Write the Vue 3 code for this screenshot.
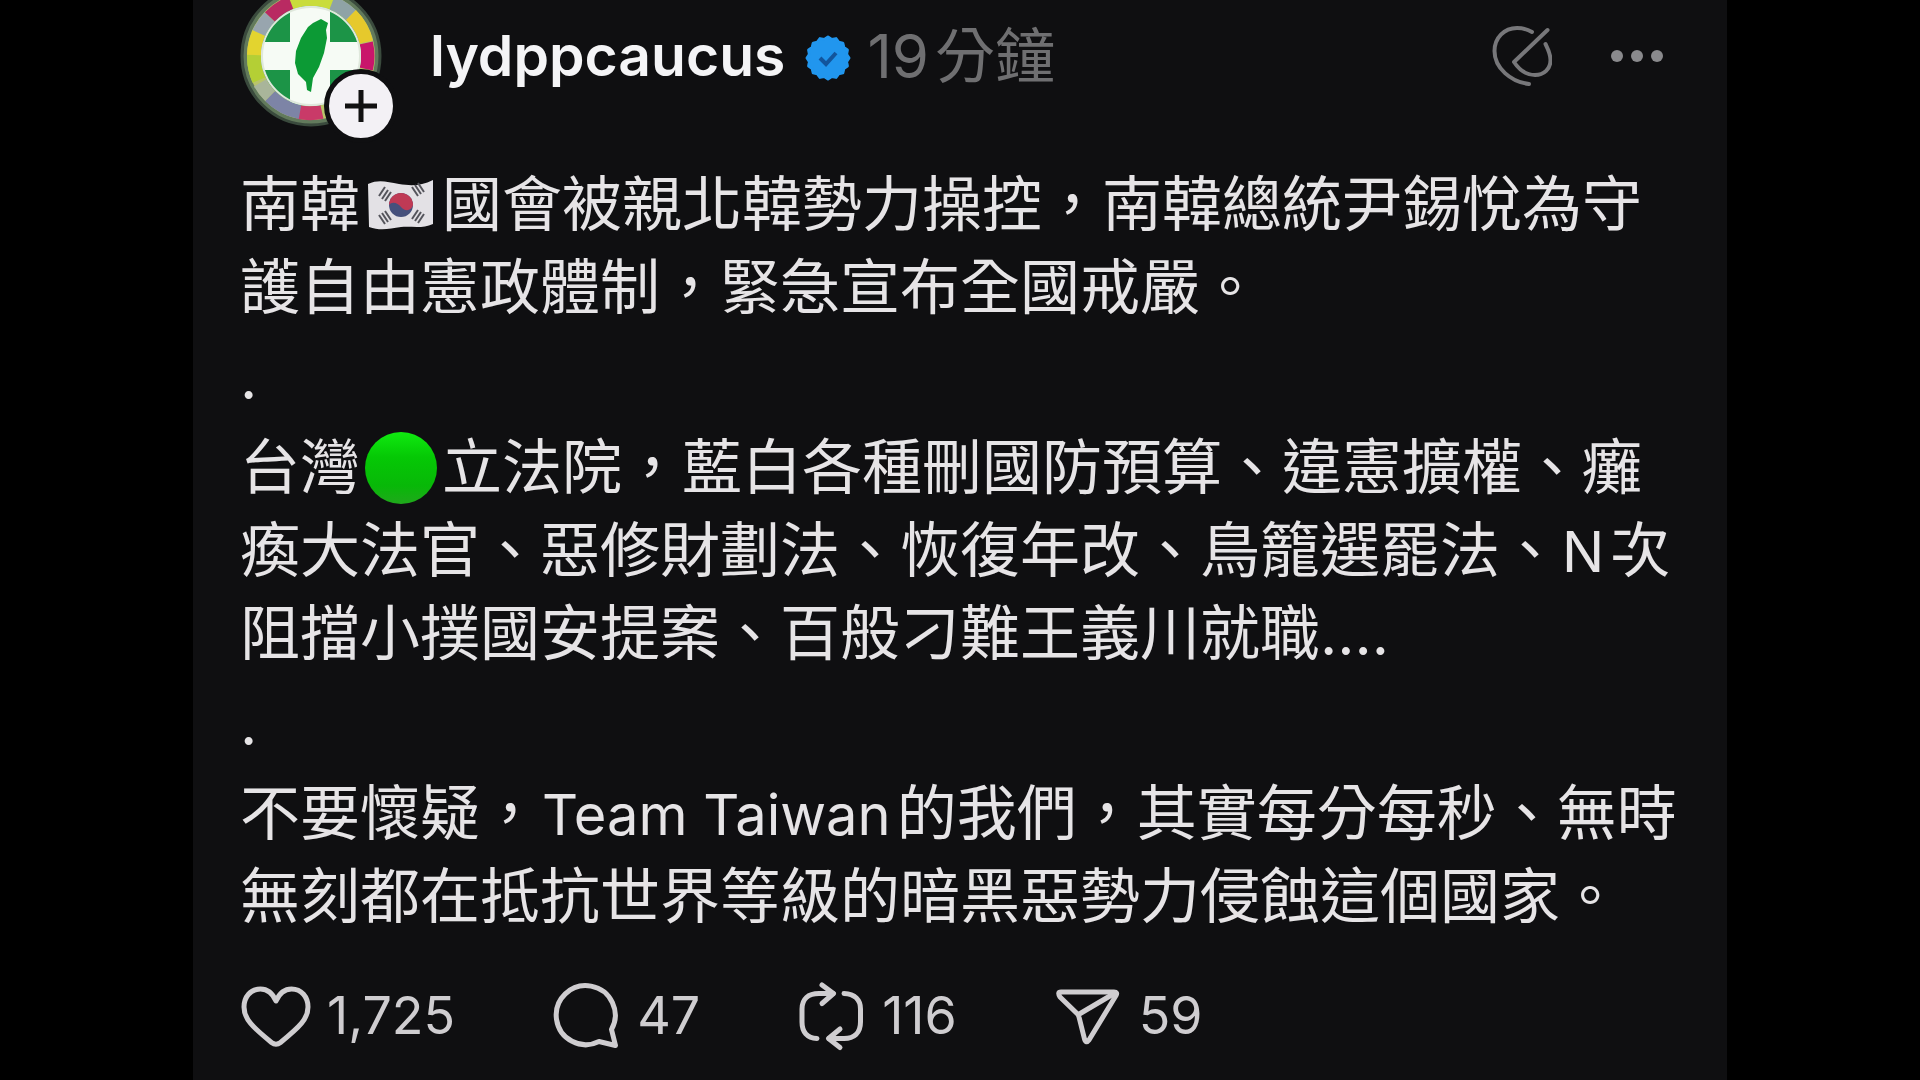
<template>
  <main class="page">
    <article class="post">
      <header class="post-header">
        <div class="avatar">
          <svg class="avatar-image" viewBox="0 0 142 142" role="img" aria-label="lydppcaucus">
            <defs>
              <clipPath id="avatar-inner">
                <circle cx="71" cy="71" r="50" />
              </clipPath>
            </defs>
            <circle cx="71" cy="71" r="69" fill="#627a5c" stroke="#3a4a3d" stroke-width="3" />
            <g fill="none" stroke-width="14">
              <circle cx="71" cy="71" r="57" stroke="#b9c46a" />
              <path d="M50 18 A57 57 0 0 1 92 18" stroke="#c9dc3c" />
              <path d="M92 18 A57 57 0 0 1 111 30" stroke="#8fa3a6" />
              <path d="M111 30 A57 57 0 0 1 126 57" stroke="#e6c92c" />
              <path d="M126 58 A57 57 0 0 1 126 84" stroke="#c9166b" />
              <path d="M82 127 A57 57 0 0 1 58 127" stroke="#c93a68" />
              <path d="M60 127 A57 57 0 0 1 30 111" stroke="#7d84a6" />
              <path d="M30 111 A57 57 0 0 1 20 98" stroke="#a9b59a" />
              <path d="M19 95 A57 57 0 0 1 14 70" stroke="#b4cf35" />
              <path d="M14 70 A57 57 0 0 1 19 48" stroke="#e3d42f" />
              <path d="M19 48 A57 57 0 0 1 30 32" stroke="#98a5ae" />
              <path d="M30 32 A57 57 0 0 1 51 18" stroke="#b92a62" />
            </g>
            <g clip-path="url(#avatar-inner)">
              <rect width="142" height="142" fill="#1c9447" />
              <path d="M50 0 H90 V57 H142 V85 H90 V142 H50 V85 H0 V57 H50 Z" fill="#f6fbf5" />
            </g>
            <circle cx="71" cy="71" r="49" fill="none" stroke="#dfe8dc" stroke-width="2" />
            <path
              d="M81 34 L88 38 L86 45 L87 53 L84 68 L79 82 L73 93 L71 107 L67 105 L66 97 L58 89 L55 78 L56 66 L61 53 L68 42 L73 38 Z"
              fill="#0c9a35"
            />
          </svg>
          <button class="follow-button" type="button" aria-label="追蹤">
            <svg viewBox="0 0 64 64" aria-hidden="true">
              <path d="M32 16 V48 M16 32 H48" fill="none" stroke="#111" stroke-width="5" />
            </svg>
          </button>
        </div>

        <a class="username" href="#">lydppcaucus</a>
        <svg class="verified" viewBox="0 0 46 46" role="img" aria-label="已驗證">
          <path :d="badgePath" fill="#2196ee" stroke="#2196ee" stroke-width="3" stroke-linejoin="round" />
          <path d="M15 23 L21 29 L31 18" fill="none" stroke="#12559c" stroke-width="4" />
        </svg>
        <time class="time">19<span class="time-unit">分鐘</span></time>

        <div class="header-actions">
          <button type="button" aria-label="編輯">
            <svg class="edit-icon" viewBox="0 0 60 60" aria-hidden="true">
              <path d="M40 6 C35 3 30 2 25 2 C12 2 2.5 12 2.5 25 C2.5 42 19 56 37 58" />
              <path d="M55.5 4 L22 36 C28 45 36 49 43 49 C52 49 58.5 43 58.5 34 C58.5 28 56 23 53.5 18" />
            </svg>
          </button>
          <button type="button" aria-label="更多">
            <svg class="more-icon" viewBox="0 0 54 20" aria-hidden="true">
              <circle cx="7" cy="10" r="6" />
              <circle cx="27" cy="10" r="6" />
              <circle cx="47" cy="10" r="6" />
            </svg>
          </button>
        </div>
      </header>

      <section class="post-body">
        <p>
          南韓<svg class="emoji" viewBox="0 0 72 72" role="img" aria-label="南韓國旗">
            <path
              d="M3 15 C14 10 22 13 34 15 C46 17 56 17 68 11 V55 C57 60 47 57 36 58 C24 60 15 62 4 58 Z"
              fill="#e3e1e5"
            />
            <circle cx="36" cy="36" r="12" fill="#46507c" />
            <path d="M24 36 A12 12 0 0 1 48 36 C46 43 39 42 36 38 C33 34 27 32 24 36 Z" fill="#bf3a55" />
            <g stroke="#55555c" stroke-width="2">
              <path d="M14 27 L20 18 M17 30 L23 21 M20 32 L26 23" />
              <path d="M47 18 L53 27 M50 16 L56 25 M53 14 L59 23" />
              <path d="M14 46 L20 55 M17 44 L23 53 M20 42 L26 51" />
              <path d="M47 50 L53 41 M50 52 L56 43 M53 54 L59 45" />
            </g>
          </svg>國會被親北韓勢力操控，南韓總統尹錫悅為守護自由憲政體制，緊急宣布全國戒嚴。
        </p>
        <p>.</p>
        <p>
          台灣<svg class="emoji" viewBox="0 0 72 72" role="img" aria-label="綠色圓形">
            <defs>
              <linearGradient id="green-dot" x1="0" y1="0" x2="0" y2="1">
                <stop offset="0" stop-color="#10ea10" />
                <stop offset="0.35" stop-color="#05c805" />
                <stop offset="0.75" stop-color="#08b808" />
                <stop offset="1" stop-color="#20a81c" />
              </linearGradient>
            </defs>
            <circle cx="36" cy="36" r="36" fill="url(#green-dot)" />
          </svg>立法院，藍白各種刪國防預算、違憲擴權、癱瘓大法官、惡修財劃法、恢復年改、鳥籠選罷法、<span class="latin">N</span>次阻擋小撲國安提案、百般刁難王義川就職....
        </p>
        <p>.</p>
        <p>
          不要懷疑，<span class="latin">Team Taiwan</span>的我們，其實每分每秒、無時無刻都在抵抗世界等級的暗黑惡勢力侵蝕這個國家。
        </p>
      </section>

      <footer class="post-actions">
        <button v-for="action in actions" :key="action.label" type="button" :aria-label="action.label">
          <svg viewBox="0 0 72 72" aria-hidden="true">
            <path v-for="d in action.paths" :key="d" :d="d" />
          </svg>
          <span>{{ action.count }}</span>
        </button>
      </footer>
    </article>
  </main>
</template>

<script setup>
const actions = [
  {
    label: '讚',
    count: '1,725',
    paths: [
      'M36 21 C32.5 13 27.5 9 20.5 9 C10.5 9 4 17 4 27 C4 39 12.5 47 31.5 62.5 Q36 66 40.5 62.5 C59.5 47 68 39 68 27 C68 17 61.5 9 51.5 9 C44.5 9 39.5 13 36 21 Z'
    ]
  },
  {
    label: '回覆',
    count: '47',
    paths: ['M61.5 49.5 A29.5 29.5 0 1 0 49 61.5 L65.5 65.5 Z']
  },
  {
    label: '轉發',
    count: '116',
    paths: [
      'M38 13.5 H24 C13 13.5 7 19 7 29 V42 C7 52 12 58 22 58.5',
      'M27 5 L38.5 13.5 L27 23.5',
      'M49 13.5 C60 14 65.5 20 65.5 29 V42 C65.5 53 59 58.5 49 58.5 H34',
      'M45 49 L33.5 58.5 L45 67.5'
    ]
  },
  {
    label: '分享',
    count: '59',
    paths: [
      'M9 12 H62 Q66 12 64 15.5 L37 60 Q34 64 32.5 59 L27 37 Q26.5 34.5 24.5 33 L8 17 Q5 12 9 12 Z',
      'M26.5 34.5 L63 13'
    ]
  }
];

// scalloped outline of the verified badge
const points = 16;
const badgePath = Array.from({ length: points * 2 }, (_, i) => {
  const angle = (Math.PI * i) / points;
  const radius = i % 2 ? 19 : 21;
  const x = 23 + radius * Math.sin(angle);
  const y = 23 - radius * Math.cos(angle);
  return `${i ? 'L' : 'M'}${x.toFixed(1)} ${y.toFixed(1)}`;
}).join(' ') + ' Z';
</script>

<style>
body {
  margin: 0;
  background: #000;
}
</style>

<style scoped>
.page {
  min-height: 100vh;
  display: flex;
  justify-content: center;
  overflow: hidden;
  background: #000;
  font-family: Inter, "Noto Sans CJK TC", sans-serif;
}

.post {
  box-sizing: border-box;
  width: 100%;
  max-width: 1534px;
  padding: 0 47px 24px;
  background: #0f0f11;
  color: #e6e4e6;
}

button {
  display: flex;
  align-items: center;
  padding: 0;
  border: none;
  background: none;
  color: inherit;
  font: inherit;
  cursor: pointer;
}

.post-header {
  display: flex;
  align-items: center;
  margin-top: -15px;
  line-height: 72px;
}

.avatar {
  position: relative;
  width: 142px;
  height: 142px;
  margin-right: 48px;
}

.avatar-image {
  display: block;
  width: 100%;
  height: 100%;
}

.follow-button {
  position: absolute;
  right: -16px;
  bottom: -16px;
  border: 5px solid #0f0f11;
  border-radius: 50%;
  background: #f3f1f5;
}

.follow-button svg {
  width: 64px;
  height: 64px;
}

.username {
  color: #f4f4f6;
  font-size: 57px;
  font-weight: 600;
  text-decoration: none;
}

.verified {
  width: 46px;
  height: 46px;
  margin: 4px 16px 0 20px;
}

.time {
  color: #6f6f71;
  font-size: 60px;
}

.time-unit {
  margin-left: 6px;
}

.header-actions {
  display: flex;
  align-items: center;
  gap: 58px;
  margin-left: auto;
  margin-right: 16px;
}

.edit-icon {
  width: 60px;
  height: 60px;
  fill: none;
  stroke: #77777a;
  stroke-width: 4;
  stroke-linecap: round;
  stroke-linejoin: round;
}

.more-icon {
  width: 54px;
  height: 20px;
  fill: #8a8a8d;
}

.post-body {
  display: flex;
  flex-direction: column;
  gap: 7px;
  margin-top: 36px;
  font-size: 60px;
  line-height: 83px;
}

.post-body p {
  margin: 0;
}

.latin {
  margin: 0 6px 0 2px;
  font-size: 56px;
  line-height: 1;
}

.emoji {
  width: 72px;
  height: 72px;
  margin: -8px 5px;
  vertical-align: -7px;
}

.post-actions {
  display: flex;
  gap: 95px;
  margin-top: 42px;
  color: #cfcdd0;
  font-size: 52px;
}

.post-actions button {
  gap: 15px;
  line-height: 72px;
}

.post-actions svg {
  width: 72px;
  height: 72px;
  fill: none;
  stroke: currentColor;
  stroke-width: 5;
  stroke-linecap: round;
  stroke-linejoin: round;
}
</style>
